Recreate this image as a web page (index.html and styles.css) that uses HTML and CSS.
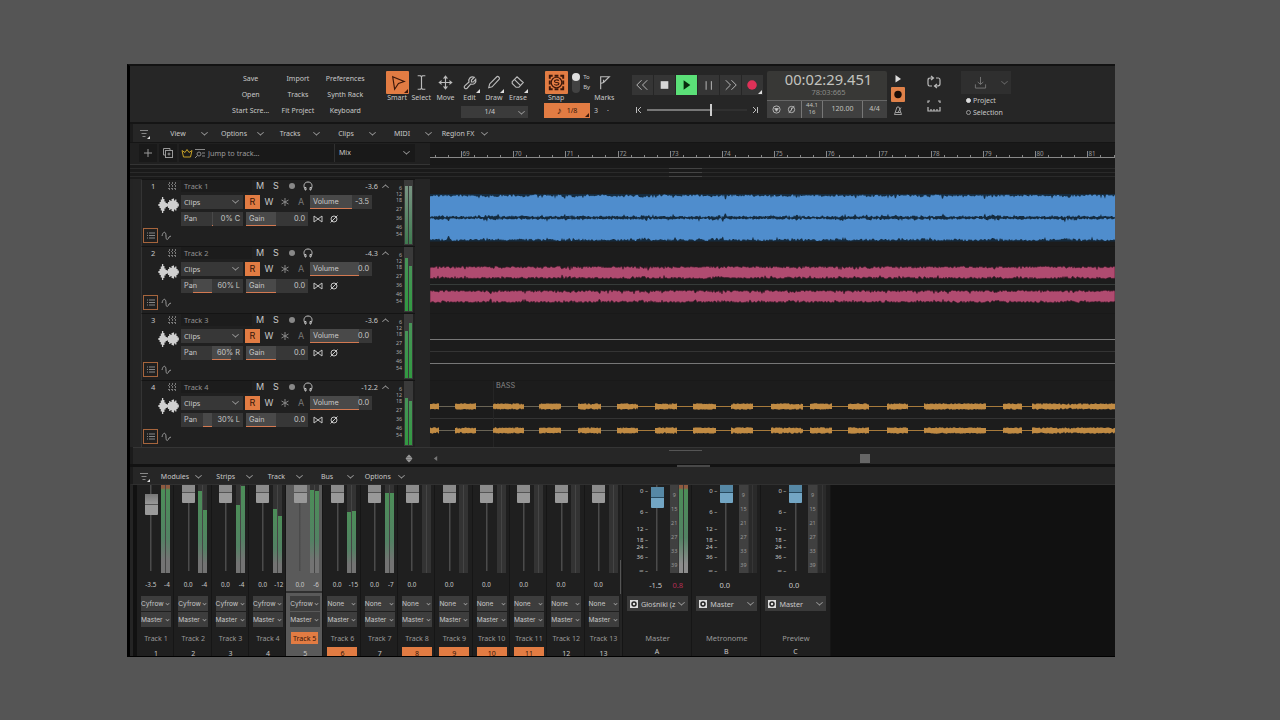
FILE: index.html
```html
<!DOCTYPE html>
<html lang="en">
<head>
    <meta charset="UTF-8">
    <meta name="viewport" content="width=device-width, initial-scale=1.0">
    <title>Multitrack Editor</title>
    <link rel="stylesheet" href="styles.css">
</head>
<body>
    <div class="window">
        <header class="toolbar">
            <div class="file-actions">
                <span>Save</span><span>Import</span><span>Preferences</span>
                <span>Open</span><span>Tracks</span><span>Synth Rack</span>
                <span>Start Scre...</span><span>Fit Project</span><span>Keyboard</span>
            </div>

            <div class="tools">
                <div class="tool-row">
                    <div class="tool active"><i class="tool-icon corner"><svg viewBox="0 0 24 24"><path d="M7 6l12 5-6 2-4 6z"/></svg></i>Smart</div>
                    <div class="tool"><i class="tool-icon"><svg viewBox="0 0 24 24"><path d="M8 5h3l1 1 1-1h3M12 6v12M8 19h3l1-1 1 1h3"/></svg></i>Select</div>
                    <div class="tool"><i class="tool-icon"><svg viewBox="0 0 24 24"><path d="M12 6v12M6 12h12M10 8l2-2.500L14 8M10 16l2 2.500 2-2.500M8 10l-2.500 2L8 14M16 10l2.500 2-2.500 2"/></svg></i>Move</div>
                    <div class="tool"><i class="tool-icon corner"><svg viewBox="0 0 24 24"><path d="M17 6.500l-3 3v2h2l2.500-3c1 4-2 6-5 5l-4 4.500c-2 1.500-4-1-2.500-2.500l4.500-4c-1-3 1.500-6.500 5.500-5z"/></svg></i>Edit</div>
                    <div class="tool"><i class="tool-icon corner"><svg viewBox="0 0 24 24"><path d="M7 17.500l1-4 7.500-7.500c1-1 3.500 1 2.500 2.500l-7.500 8z"/></svg></i>Draw</div>
                    <div class="tool"><i class="tool-icon corner"><svg viewBox="0 0 24 24"><path d="M6.500 11l5-5 6.500 6-4.500 5h-3l-4-4zM9 9l6 6"/></svg></i>Erase</div>
                </div>
                <div class="grid-select"><span>1/4</span><b class="chevron"></b></div>
            </div>

            <div class="snap">
                <div class="snap-top">
                    <div class="tool active"><i class="tool-icon"><svg viewBox="0 0 24 24"><path d="M5 8V5h3M10 5h4M16 5h3v3M19 10v4M19 16v3h-3M14 19h-4M8 19H5v-3M5 14v-4" stroke-width="2"/><circle cx="12" cy="12" r="5.500"/><path d="M14.500 10c-1-1-5-1-4.500 1s4.500 0 4.500 2-3.500 2-4.800 1"/></svg></i>Snap</div>
                    <i class="toggle"></i>
                    <div class="toggle-labels"><span>To</span><span>By</span></div>
                    <div class="tool marks"><i class="tool-icon"><svg viewBox="0 0 24 24"><path d="M8 19V6h9l-6 6-3 1M11 9v3"/></svg></i>Marks</div>
                </div>
                <div class="snap-bottom">
                    <div class="note-value corner"><span>♪</span><span>1/8</span></div>
                    <span class="mark-count">3</span><span>·</span>
                </div>
            </div>

            <div class="transport">
                <div class="transport-buttons">
                    <i><svg viewBox="0 0 22 20"><path d="M10 5l-5 5 5 5M16 5l-5 5 5 5"/></svg></i>
                    <i><svg viewBox="0 0 22 20"><rect x="7" y="6" width="8" height="8" fill="#d8d8d8" stroke="none"/></svg></i>
                    <i class="playing"><svg viewBox="0 0 22 20"><path d="M8 5v10l7-5z" fill="#082b0d" stroke="none"/></svg></i>
                    <i><svg viewBox="0 0 22 20"><path d="M8.500 6v9M14 6v9"/></svg></i>
                    <i><svg viewBox="0 0 22 20"><path d="M6 5l5 5-5 5M12 5l5 5-5 5"/></svg></i>
                    <i class="corner"><svg viewBox="0 0 22 20"><circle cx="10.500" cy="10" r="5" fill="#df3158" stroke="none"/></svg></i>
                </div>
                <div class="shuttle">
                    <svg viewBox="0 0 8 8"><path d="M1.500 1v6M6 1L3 4l3 3"/></svg>
                    <div class="shuttle-track"><i></i></div>
                    <svg viewBox="0 0 8 8"><path d="M6.500 1v6M2 1l3 3-3 3"/></svg>
                </div>
            </div>

            <div class="display">
                <div class="clock">00:02:29.451</div>
                <div class="bars">78:03:665</div>
                <div class="display-info">
                    <span class="io">
                        <svg viewBox="0 0 10 10"><circle cx="5" cy="5" r="4"/><path d="M3 4h4L5 7z" fill="#ccc"/></svg>
                        <svg viewBox="0 0 10 10"><circle cx="5" cy="5" r="3.500"/><path d="M2 9l6-8M5 3v3"/></svg>
                    </span>
                    <span class="rate">44.1<br>16</span>
                    <span>120.00</span>
                    <span>4/4</span>
                </div>
            </div>

            <div class="record-opts">
                <svg viewBox="0 0 14 14"><path d="M4.500 3v7.500L10 7z" fill="#ddd" stroke="none"/></svg>
                <i><svg viewBox="0 0 14 14"><circle cx="7" cy="7.500" r="3.700" fill="#180d08" stroke="none"/></svg></i>
                <svg viewBox="0 0 14 14"><path d="M6 3h2l2.500 7.500h-7zM4.500 8.500h5M7 8.500l3-5" stroke-width=".8"/></svg>
            </div>

            <div class="loop-opts">
                <svg viewBox="0 0 16 16"><path d="M6 12H3.500C2 12 2 11 2 10V6c0-2 1-2 3-2h2M5 2l2.500 2L5 6M10 4h2.500c1.500 0 1.500 1 1.500 2v4c0 2-1 2-3 2H9M11 10l-2.500 2 2.500 2"/></svg>
                <svg viewBox="0 0 16 16"><path d="M2 9v4h12V9M5 13v-2M8 13v-2M11 13v-2M2 5V3h2M14 5V3h-2"/></svg>
            </div>

            <div class="export">
                <div class="export-button">
                    <svg viewBox="0 0 14 14"><path d="M7 1v8M4 6.500L7 9l3-2.500M1.500 9v4h11V9"/></svg>
                    <b class="chevron"></b>
                </div>
                <div class="radio checked">Project</div>
                <div class="radio">Selection</div>
            </div>
        </header>

        <nav class="menubar">
            <svg class="filter-icon" viewBox="0 0 12 12"><path d="M1 2.500h8M2.500 5.500h5M3.500 8.500h3"/><path d="M11 8v3H8z" fill="#ddd" stroke="none"/></svg>
            <div><span>View</span><b class="chevron"></b></div>
            <div><span>Options</span><b class="chevron"></b></div>
            <div><span>Tracks</span><b class="chevron"></b></div>
            <div><span>Clips</span><b class="chevron"></b></div>
            <div><span>MIDI</span><b class="chevron"></b></div>
            <div><span>Region FX</span><b class="chevron"></b></div>
        </nav>

        <div class="finder">
            <svg class="finder-btn" viewBox="0 0 12 12"><path d="M6 2v8M2 6h8"/></svg>
            <svg class="finder-btn" viewBox="0 0 12 12"><path d="M3 8H1.500V1.500H8V3"/><rect x="3.500" y="3.500" width="7" height="7"/><path d="M7 5.500v3M5.500 7h3"/></svg>
            <div class="jump">
                <svg class="crown" viewBox="0 0 12 12"><path d="M2.500 10L1 3.500l3 2 2-3 2 3 3-2L9.500 10z"/></svg>
                <svg viewBox="0 0 12 12"><circle cx="5" cy="7" r="2"/><path d="M3.500 8.500L1 11M1 2.500h10M8 6h3M8 9h3"/></svg>
                <span>Jump to track...</span>
            </div>
            <div class="mix"><span>Mix</span><b class="chevron"></b></div>
            <svg class="ruler" id="ruler"></svg>
        </div>

        <div class="overview"><i></i></div>

        <main class="arrange">
            <div class="tracks" id="tracks"></div>
            <div class="clips" id="clips"></div>
        </main>

        <div class="arrange-scroll">
            <svg class="zoom-icon" viewBox="0 0 10 10"><path d="M5 0l4 4H1zM5 10l4-4H1zM1 4.500h8v1H1z"/></svg>
            <svg class="scroll-arrow" viewBox="0 0 6 6"><path d="M5 0v6L1 3z"/></svg>
            <i class="grip"></i>
            <i class="scroll-thumb"></i>
        </div>
        <div class="splitter"><i></i></div>

        <nav class="menubar mixer-menu">
            <svg class="filter-icon" viewBox="0 0 12 12"><path d="M1 2.500h8M2.500 5.500h5M3.500 8.500h3"/><path d="M11 8v3H8z" fill="#ddd" stroke="none"/></svg>
            <div><span>Modules</span><b class="chevron"></b></div>
            <div><span>Strips</span><b class="chevron"></b></div>
            <div><span>Track</span><b class="chevron"></b></div>
            <div><span>Bus</span><b class="chevron"></b></div>
            <div><span>Options</span><b class="chevron"></b></div>
        </nav>

        <section class="mixer">
            <div class="strips" id="strips"></div>
            <div class="mixer-divider"></div>
            <div class="buses" id="buses"></div>
        </section>
    </div>
    <script src="script.js"></script>
</body>
</html>
```
FILE: styles.css
```css
* {
    box-sizing: border-box;
}
body {
    margin: 0;
    padding: 64px 0 0 127px;
    height: 720px;
    overflow: hidden;
    background-color: #555;
    font-family: "Noto Sans", "Open Sans", sans-serif;
    font-size: 7px;
    line-height: 10px;
    color: #c8c8c8;
}
i {
    font-style: normal;
    display: block;
}
svg {
    display: block;
    fill: none;
    stroke: #bbb;
    stroke-width: 1;
    flex: none;
}
.window {
    width: 988px;
    height: 593px;
    overflow: hidden;
    background-color: #1b1b1b;
    border-left: 3px solid #000;
    border-top: 2px solid #121212;
    border-bottom: 1px solid #000;
}
.chevron {
    width: 5px;
    height: 5px;
    margin: 0 4px 2px;
    border-right: 1px solid #999;
    border-bottom: 1px solid #999;
    transform: scaleY(0.85) rotate(45deg);
    flex: none;
}
.corner {
    position: relative;
}
.corner::after {
    content: "";
    position: absolute;
    right: 1px;
    bottom: 1px;
    border-left: 4px solid transparent;
    border-bottom: 4px solid #ddd;
}
.active .corner::after,
.note-value.corner::after {
    border-bottom-color: #3a170a;
}

/* toolbar */
.toolbar {
    display: flex;
    height: 58px;
    padding-left: 97px;
    background-color: #262626;
    border-bottom: 2px solid #151515;
}
.file-actions {
    display: grid;
    grid-template-columns: repeat(3, 47.3px);
    grid-auto-rows: 16px;
    width: 142px;
    padding-top: 5px;
    line-height: 16px;
    text-align: center;
    white-space: nowrap;
}
.tools {
    width: 145px;
    margin-left: 16px;
    padding-top: 5px;
}
.tool-row {
    display: flex;
}
.tool {
    width: 24.2px;
    text-align: center;
    line-height: 8px;
}
.tool-icon {
    width: 23px;
    height: 23px;
    margin: 0 auto;
    border-radius: 1px;
}
.tool-icon svg {
    width: 23px;
    height: 23px;
    stroke-width: 1.2;
}
.active .tool-icon {
    background-color: #e27c43;
}
.active svg {
    stroke: #3a170a;
}
.grid-select {
    display: flex;
    align-items: center;
    justify-content: flex-end;
    width: 67px;
    height: 12px;
    margin: 4px 0 0 76px;
    background-color: #3b3b3b;
}
.grid-select span {
    margin-right: 20px;
}
.snap {
    width: 86px;
    margin-left: 14px;
    padding-top: 5px;
}
.snap-top {
    display: flex;
}
.toggle {
    width: 8px;
    height: 20px;
    margin: 2px 0 0 4px;
    border-radius: 4px;
    background-color: #424242;
}
.toggle::before {
    content: "";
    display: block;
    width: 8px;
    height: 8px;
    border-radius: 50%;
    background-color: #ddd;
}
.toggle-labels {
    display: flex;
    flex-direction: column;
    margin: 1px 0 0 3px;
    width: 10px;
    font-size: 6px;
}
.marks {
    margin-left: -1px;
}
.snap-bottom {
    display: flex;
    margin-top: 1px;
    line-height: 15px;
}
.note-value {
    display: flex;
    justify-content: center;
    gap: 5px;
    width: 46px;
    height: 15px;
    color: #35160a;
    background-color: #e27c43;
}
.note-value span:first-child {
    font-size: 10px;
}
.mark-count {
    margin: 0 9px 0 4px;
}
.transport {
    width: 132px;
    margin-left: 2px;
    padding-top: 9px;
}
.transport-buttons {
    display: flex;
    gap: 1px;
}
.transport-buttons i {
    width: 21px;
    height: 20px;
    background-color: #353535;
}
.transport-buttons .playing {
    background-color: #5be078;
}
.transport-buttons svg {
    width: 21px;
    height: 20px;
}
.shuttle {
    display: flex;
    align-items: center;
    gap: 4px;
    margin-top: 9px;
    padding: 0 3px;
}
.shuttle svg {
    width: 8px;
    height: 8px;
}
.shuttle-track {
    display: flex;
    justify-content: flex-end;
    align-items: center;
    width: 100px;
    height: 12px;
    padding-right: 35px;
    background: linear-gradient(90deg, #777 63%, #303030 63%) center / 100% 2px no-repeat;
}
.shuttle-track i {
    width: 2px;
    height: 12px;
    background-color: #ccc;
}
.display {
    width: 120px;
    height: 47px;
    margin: 5px 0 0 3px;
    background-color: #383836;
    border-radius: 2px;
    text-align: center;
    color: #c3c3bf;
}
.clock {
    height: 17px;
    padding-left: 3px;
    font-size: 14.7px;
    line-height: 17px;
}
.bars {
    height: 12px;
    padding-left: 3px;
    font-size: 7.5px;
    line-height: 9px;
    color: #8b8b88;
}
.display-info {
    display: flex;
    height: 18px;
    border-top: 1px solid #666;
    background-color: #404040;
    line-height: 16px;
}
.display-info span {
    width: 40px;
    border-left: 1px solid #777;
}
.display-info .io {
    display: flex;
    align-items: center;
    justify-content: space-evenly;
    width: 34px;
    border-left: none;
}
.display-info svg {
    width: 9px;
    height: 9px;
}
.display-info .rate {
    width: 21px;
    font-size: 6px;
    line-height: 7px;
    padding-top: 1px;
}
.display-info span:last-child {
    width: 24px;
}
.record-opts {
    width: 15px;
    margin-left: 4px;
    padding-top: 6px;
}
.record-opts svg {
    width: 14px;
    height: 14px;
}
.record-opts i {
    width: 14px;
    height: 15px;
    margin: 1px 0 2px;
    border-radius: 1px;
    background-color: #df8149;
}
.loop-opts {
    margin-left: 20px;
    padding-top: 8px;
}
.loop-opts svg {
    width: 16px;
    height: 16px;
    margin-bottom: 8px;
    stroke-width: 1.2;
}
.export {
    width: 54px;
    margin-left: 19px;
    padding-top: 5px;
}
.export-button {
    display: flex;
    align-items: center;
    justify-content: flex-end;
    gap: 11px;
    width: 50px;
    height: 23px;
    background-color: #2f2f2f;
}
.export-button svg {
    width: 13px;
    height: 13px;
    stroke: #777;
}
.export-button .chevron {
    border-color: #666;
}
.radio {
    display: flex;
    align-items: center;
    gap: 2px;
    height: 12px;
    padding: 1px 0 0 5px;
}
.radio::before {
    content: "";
    width: 5px;
    height: 5px;
    border: 1px solid #999;
    border-radius: 50%;
    box-sizing: border-box;
}
.radio.checked::before {
    background-color: #ddd;
    border-color: #ddd;
}

/* menu bars */
.menubar {
    display: flex;
    align-items: center;
    height: 18px;
    padding-top: 1px;
    margin-left: 3px;
    background-color: #262626;
}
.menubar > div {
    display: flex;
    align-items: center;
    width: 56px;
}
.menubar > div > span {
    width: 38px;
    text-align: center;
    white-space: nowrap;
}
.menubar .filter-icon {
    width: 14px;
    height: 12px;
    margin: 0 7px 0 5px;
    stroke: #888;
}
.menubar .chevron {
    margin-left: 5px;
}

/* search row and ruler */
.finder {
    display: flex;
    align-items: center;
    height: 23px;
    padding-left: 9px;
    border-top: 1px solid #151515;
    border-bottom: 1px solid #343434;
    background-color: #202020;
}
.finder-btn {
    width: 18px;
    height: 18px;
    padding: 3px;
    margin-right: 2px;
    background-color: #191919;
    stroke: #999;
}
.finder > :not(.ruler) {
    margin-top: -2px;
}
.jump {
    display: flex;
    align-items: center;
    gap: 1px;
    width: 156px;
    height: 18px;
    padding-left: 2px;
    background-color: #191919;
    border-right: 1px solid #303030;
    color: #9b9b9b;
    font-size: 7.3px;
}
.jump svg {
    width: 12px;
    height: 12px;
    stroke: #888;
}
.jump .crown {
    stroke: #c6a126;
}
.jump span {
    margin-left: 1px;
}
.mix {
    display: flex;
    align-items: center;
    justify-content: space-between;
    width: 80px;
    height: 18px;
    padding: 0 2px 0 4px;
    background-color: #191919;
}
.ruler {
    width: 685px;
    height: 22px;
    margin-left: 15px;
    background-color: #191919;
    stroke: #888;
    shape-rendering: crispEdges;
}
.ruler text {
    fill: #999;
    stroke: none;
    font-size: 6.3px;
}
.overview {
    height: 14px;
    padding-left: 539px;
    background: repeating-linear-gradient(#1a1a1a 0 3px, #2a2a2a 3px 4px);
}
.overview i {
    width: 33px;
    height: 13px;
    background: linear-gradient(#444, #444) 0 3px / 100% 1px no-repeat, linear-gradient(#444, #444) 0 7px / 100% 1px no-repeat, linear-gradient(#444, #444) 0 11px / 100% 1px no-repeat;
}

/* tracks */
.arrange {
    display: flex;
    height: 268px;
    background-color: #1c1c1c;
}
.tracks {
    width: 300px;
    padding: 0 15px 0 8px;
    border-left: 3px solid #242424;
    background-color: #252525;
}
.track {
    display: flex;
    height: 67px;
    background-color: #202020;
    border-top: 1px solid #141414;
    border-left: 1px solid #343434;
}
.track-side {
    display: grid;
    grid-template-columns: 22px 18px;
    grid-template-rows: 14px 34px 17px;
    width: 39px;
    flex: none;
}
.track-number {
    padding-left: 9px;
    font-size: 7.5px;
    line-height: 13px;
}
.track-side .dots {
    width: 9px;
    height: 9px;
    margin: 2px 0 0 4px;
    stroke: #777;
}
.wave-icon {
    grid-column: 1 / 3;
    width: 21px;
    height: 20px;
    margin: 1px 0 0 16px;
}
.list-icon {
    width: 15px;
    height: 15px;
    margin-left: 1px;
    border: 1px solid #a6653d;
    stroke: #888;
}
.curve-icon {
    width: 11px;
    height: 11px;
    margin: 2px 0 0 -3px;
    stroke: #999;
}
.track-body {
    width: 211px;
    flex: none;
}
.track-head {
    display: flex;
    align-items: center;
    height: 12px;
    margin-bottom: 3px;
}
.track-name {
    width: 71px;
    padding-left: 3px;
    background-color: #1c1c1c;
    font-size: 7.4px;
    line-height: 12px;
    color: #929292;
}
.cell {
    width: 16px;
    text-align: center;
    font: 9px/14px Inter, "Liberation Sans", sans-serif;
}
.cell svg {
    width: 10px;
    height: 10px;
    margin: 2px auto;
    stroke: #c4c4c4;
}
.dim {
    color: #777;
}
.peak {
    width: 62px;
    text-align: right;
    font-size: 7.3px;
    line-height: 9px;
}
.peak + .chevron {
    margin: 3px 0 0 5px;
    transform: scaleY(0.85) rotate(225deg);
}
.track-row {
    display: flex;
    height: 14px;
    margin-bottom: 3px;
    font-family: Inter, "Liberation Sans", sans-serif;
}
.field {
    position: relative;
    display: flex;
    align-items: center;
    justify-content: space-between;
    width: 62px;
    height: 14px;
    margin-right: 3px;
    padding: 0 3px;
    font: 7.3px/12px Inter, "Liberation Sans", sans-serif;
    background-color: #373737;
}
.field.clips-field {
    margin-right: 2px;
    padding-bottom: 1px;
    font-family: "Noto Sans", sans-serif;
}
.field.volume {
    margin-left: 1px;
}
.field .chevron {
    margin-right: 2px;
}
.field .fill {
    position: absolute;
    top: 0;
    bottom: 0;
    border-bottom: 1.5px solid #d37951;
    background-color: #494949;
}
.field span {
    position: relative;
}
.read {
    width: 15px;
    margin-right: 1px;
    background-color: #e27c43;
    color: #35160a;
}
.track-row:last-child .cell {
    margin-left: -1px;
    margin-right: 1px;
}
.scale {
    display: flex;
    flex-direction: column;
    width: 15px;
    padding: 5px 2px 0 0;
    margin-left: -3px;
    font-size: 5.3px;
    line-height: 6px;
    text-align: right;
    color: #aaa;
}
.scale span {
    height: 9px;
}
.scale span:nth-child(-n+2) {
    height: 6px;
}
.scale span:nth-child(6) {
    height: 7px;
}
.track-meter {
    display: flex;
    align-items: flex-end;
    gap: 1px;
    width: 9px;
    height: 65px;
    padding: 1px;
    background-color: #3a3a3a;
    flex: none;
}
.track-meter i {
    width: 3px;
    background: linear-gradient(#489458, #319a41);
}
.track.muted .track-meter i {
    background: linear-gradient(#799483, #3f7b50);
}
.clips {
    width: 685px;
    overflow: hidden;
}
.clips svg {
    width: 685px;
    height: 67px;
    border-top: 1px solid #191919;
}
.clips text {
    fill: #888;
    stroke: none;
    font: 7.3px Inter, sans-serif;
}
.arrange-scroll {
    display: flex;
    height: 17px;
    padding-top: 3px;
    margin-left: 3px;
    border-top: 1px solid #353535;
    background-color: #262626;
}
.zoom-icon {
    width: 8px;
    height: 9px;
    margin: 3px 0 0 272px;
    fill: #999;
    stroke: none;
}
.scroll-arrow {
    width: 5px;
    height: 5px;
    margin: 5px 0 0 20px;
    fill: #777;
    stroke: none;
}
.grip {
    width: 33px;
    height: 1px;
    margin: -1px 0 0 231px;
    background-color: #555;
}
.scroll-thumb {
    width: 10px;
    height: 9px;
    margin: 3px 0 0 158px;
    background-color: #666;
}
.splitter {
    height: 3px;
    padding: 1px 0 0 547px;
    background-color: #121212;
}
.splitter i {
    width: 33px;
    height: 2px;
    background-color: #484848;
}
.mixer-menu {
    height: 17px;
    padding-top: 2px;
}
.mixer-menu > div {
    width: 50.7px;
}
.mixer-menu > div > span {
    width: 32px;
}

/* mixer */
.mixer {
    display: flex;
    height: 172px;
    padding-left: 4px;
    background-color: #111;
    border-top: 1px solid #303030;
    border-left: 3px solid #242424;
}
.strips {
    display: flex;
    width: 485px;
    flex: none;
}
.strip {
    width: 37.3px;
    flex: none;
    padding-left: 4px;
    background-color: #1f1f1f;
    border-right: 1px solid #161616;
}
.strip.selected {
    background: linear-gradient(#5a5a5a 106px, #303030 106px, #303030 108px, #5a5a5a 108px);
}
.fader-area {
    display: flex;
    height: 88px;
}
.fader {
    width: 20px;
    height: 86px;
    background: linear-gradient(#4b4b4b, #4b4b4b) center / 1.5px 100% no-repeat;
}
.knob {
    width: 13px;
    height: 18px;
    margin: 0 auto;
    border-radius: 0 0 1px 1px;
    background: linear-gradient(#8b8b8b 7px, #555 7px, #555 8px, #999 8px);
}
.fader .low {
    height: 21px;
    background: linear-gradient(#777, #999 10px, #555 10px, #555 11px, #9a9a9a 11px);
}
.fader:has(.low) {
    padding-top: 9px;
}
.strip-meter {
    display: flex;
    align-items: flex-end;
    gap: 1px;
    width: 9px;
    height: 88px;
    background: linear-gradient(90deg, #333 4px, #454545 4px, #454545 5px, #333 5px);
}
.strip-meter i {
    width: 4px;
    background: linear-gradient(#4c8e58, #528263 60%, #737373 85%);
}
.strip-meter i.clip {
    background: linear-gradient(#8f5a40 3px, #4c8e58 5px, #528263 60%, #737373 85%);
}
.levels {
    display: flex;
    height: 23px;
    font-size: 6.3px;
    line-height: 24px;
}
.levels span:first-child {
    width: 20px;
    text-align: center;
}
.levels span:last-child {
    width: 13px;
    text-align: center;
}
.route {
    display: flex;
    align-items: center;
    justify-content: space-between;
    width: 30px;
    height: 15px;
    margin-bottom: 1px;
    padding: 0 1px 0 0;
    background-color: #3d3d3d;
    font: 6.6px/12px Inter, "Liberation Sans", sans-serif;
}
.route .chevron {
    width: 3px;
    height: 3px;
    margin: 0 1px 1px 0;
}
.strip-name {
    width: 30px;
    height: 12px;
    margin: 5px 0 3px;
    font-size: 7.1px;
    line-height: 12px;
    text-align: center;
    white-space: nowrap;
    color: #999;
}
.selected .strip-name {
    width: 27px;
    margin-left: 1px;
    color: #35160a;
    background-color: #e27c43;
}
.strip-number {
    width: 30px;
    height: 12px;
    font-size: 7px;
    line-height: 14px;
    text-align: center;
}
.strip-number.armed {
    color: #35160a;
    background-color: #e27c43;
}
.mixer-divider {
    width: 3px;
    height: 171px;
    margin-left: -2px;
    background: linear-gradient(#555, #555) 0 75px / 1px 34px no-repeat, #242424;
    border-right: 1px solid #151515;
}
.buses {
    display: flex;
}
.bus {
    width: 69.2px;
    padding-left: 4px;
    background-color: #1f1f1f;
    border-right: 1px solid #161616;
}
.bus-fader-area {
    display: flex;
    height: 88px;
}
.db-scale {
    position: relative;
    width: 21px;
}
.db-scale span {
    position: absolute;
    right: 0;
    font-size: 6px;
    line-height: 8px;
}
.bus .fader {
    width: 18px;
}
.bus .knob {
    background: linear-gradient(#5688a5 7px, #274a5f 7px, #274a5f 8px, #73a6c4 8px);
}
.bus .fader:has(.low) {
    padding-top: 2px;
}
.bus .low {
    background: linear-gradient(#5688a5 10px, #274a5f 10px, #274a5f 11px, #73a6c4 11px);
}
.bus-meter {
    display: flex;
    align-items: flex-end;
    gap: 1px;
    width: 18px;
    height: 88px;
    margin-left: 4px;
    background-color: #363636;
}
.bus-meter div {
    width: 9px;
    height: 88px;
    padding-top: 3px;
    background-color: #404040;
    color: #999;
    font-size: 5.5px;
    line-height: 14px;
    text-align: center;
}
.bus-meter i {
    width: 4px;
    height: 88px;
    background: #2a2a2a;
}
.bus-meter i.clip {
    background: linear-gradient(#8f5a40 3px, #4c8e58 5px, #528263 60%, #8c8c8c 90%);
}
.bus .levels {
    padding-left: 20px;
    font-size: 7.5px;
}
.bus .levels span:last-child {
    width: 31px;
}
.over {
    color: #b72e56;
}
.output {
    display: flex;
    align-items: center;
    gap: 3px;
    width: 61px;
    height: 15px;
    padding-left: 3px;
    background-color: #3a3a3a;
    font-size: 7.2px;
}
.output svg {
    width: 8px;
    height: 8px;
}
.output span {
    width: 35px;
    flex: none;
    white-space: nowrap;
}
.output .chevron {
    margin: 0 0 2px;
}
.bus-name {
    height: 31px;
    padding: 23px 3px 0 0;
    font-size: 7.5px;
    line-height: 9px;
    text-align: center;
    color: #999;
}
.bus-letter {
    padding: 5px 4px 0 0;
    font-size: 7px;
    line-height: 9px;
    text-align: center;
}
```
FILE: script.js
```js
const tracks = [
    { peak: '-3.6', volume: '-3.5', volFill: 42, pan: '0% C', panFrom: 31, panWidth: 1, meter: [58, 58], muted: true },
    { peak: '-4.3', volume: '0.0', volFill: 49, pan: '60% L', panFrom: 12, panWidth: 19, meter: [53, 45] },
    { peak: '-3.6', volume: '0.0', volFill: 49, pan: '60% R', panFrom: 31, panWidth: 19, meter: [47, 55] },
    { peak: '-12.2', volume: '0.0', volFill: 49, pan: '30% L', panFrom: 22, panWidth: 9, meter: [47, 44] }
];

const strips = [
    { gain: '-3.5', peak: '-4', meter: [88, 88], low: true, clip: true },
    { gain: '0.0', peak: '-4', meter: [82, 63] },
    { gain: '0.0', peak: '-4', meter: [68, 87] },
    { gain: '0.0', peak: '-12', meter: [64, 57] },
    { gain: '0.0', peak: '-6', meter: [83, 82], selected: true },
    { gain: '0.0', peak: '-15', meter: [61, 62], armed: true },
    { gain: '0.0', peak: '-7', meter: [80, 80] },
    { gain: '0.0', armed: true },
    { gain: '0.0', armed: true },
    { gain: '0.0', armed: true },
    { gain: '0.0', armed: true },
    { gain: '0.0' },
    { gain: '0.0' }
];

const buses = [
    { name: 'Master', letter: 'A', gain: '-1.5', peak: '0.8', output: 'Głośniki (z', live: true },
    { name: 'Metronome', letter: 'B', gain: '0.0', peak: '', output: 'Master' },
    { name: 'Preview', letter: 'C', gain: '0.0', peak: '', output: 'Master' }
];

// seeded so the waveforms look the same on every load
let seed = 7;
function random() {
    seed = (seed * 16807) % 2147483647;
    return seed / 2147483647;
}

function fillBar(from, width) {
    return `<i class="fill" style="left:${from}px;width:${width}px"></i>`;
}

// loud passages bulge slowly, so the gaps cluster instead of being even
function wavePath(from, to, top, bottom, rough) {
    let upper = '';
    let lower = '';
    for (let x = from; x <= to; x += 1) {
        const swell = Math.max(0, Math.sin(x / 8) * Math.sin(x / 27)) * rough * 0.6;
        const spike = random() > 0.94 ? rough : 0;
        upper += `L${x} ${(top + random() * (rough + swell) + spike).toFixed(1)}`;
        lower = `L${x} ${(bottom - random() * (rough + swell) - spike).toFixed(1)}` + lower;
    }
    return 'M' + upper.slice(1) + lower + 'z';
}

function waveIcon() {
    const heights = [2, 6, 11, 16, 12, 7, 4, 3, 6, 10, 8, 12, 13, 9, 11, 6, 3];
    let d = '';
    heights.forEach((h, i) => { d += `M${i * 1.2 + 1} ${10 - h / 2}v${h}`; });
    return `<svg class="wave-icon" viewBox="0 0 21 20"><path d="${d}" stroke="#d0d0d0" stroke-width="1.3"/></svg>`;
}

function trackRow(t, i) {
    return `
    <div class="track ${t.muted ? 'muted' : ''}">
        <div class="track-side">
            <span class="track-number">${i + 1}</span>
            <svg class="dots" viewBox="0 0 9 9"><path d="M1.500 0v9M4.500 0v9M7.500 0v9" stroke-dasharray="2 1"/><path d="M0 2.500h9M0 6.500h9" stroke-dasharray="1 2"/></svg>
            ${waveIcon()}
            <svg class="list-icon" viewBox="0 0 13 13"><path d="M3 4h1M5 4h6M3 6.500h1M5 6.500h6M3 9h1M5 9h6"/></svg>
            <svg class="curve-icon" viewBox="0 0 11 11"><path d="M1 6c1-5 4-5 4 0s2 4 3 1l2-1"/></svg>
        </div>
        <div class="track-body">
            <div class="track-head">
                <span class="track-name">Track ${i + 1}</span>
                <span class="cell">M</span>
                <span class="cell">S</span>
                <span class="cell"><svg viewBox="0 0 10 10"><circle cx="5" cy="5" r="3" fill="#888" stroke="none"/></svg></span>
                <span class="cell"><svg viewBox="0 0 10 10"><path d="M3 9H2V8C0 5 1 1 5 1s5 4 3 7v1H7V6.500h1.500M3 9V6.500H1.500"/></svg></span>
                <span class="peak">${t.peak}</span><b class="chevron"></b>
            </div>
            <div class="track-row">
                <div class="field clips-field"><span>Clips</span><b class="chevron"></b></div>
                <span class="cell read">R</span>
                <span class="cell">W</span>
                <span class="cell"><svg viewBox="0 0 10 10"><path d="M5 1v8M1.500 3l7 4M8.500 3l-7 4" stroke="#888"/></svg></span>
                <span class="cell dim">A</span>
                <div class="field volume">${fillBar(0, t.volFill)}<span>Volume</span><span>${t.volume}</span></div>
            </div>
            <div class="track-row">
                <div class="field">${fillBar(t.panFrom, t.panWidth)}<span>Pan</span><span>${t.pan}</span></div>
                <div class="field">${fillBar(0, 30)}<span>Gain</span><span>0.0</span></div>
                <span class="cell"><svg viewBox="0 0 10 10"><path d="M1 2v6l8-6v6L1 2"/></svg></span>
                <span class="cell"><svg viewBox="0 0 10 10"><circle cx="5" cy="5" r="3"/><path d="M1.500 8.500l7-7"/></svg></span>
            </div>
        </div>
        <div class="scale"><span>6</span><span>12</span><span>18</span><span>27</span><span>36</span><span>46</span><span>54</span></div>
        <div class="track-meter"><i style="height:${t.meter[0]}px"></i><i style="height:${t.meter[1]}px"></i></div>
    </div>`;
}

function blueClip() {
    return `<svg><rect y="14" width="685" height="47.500" fill="#152b3e" stroke="none"/>
        <path d="${wavePath(0, 685, 14.5, 38, 2.2)}" fill="#4f8dcd" stroke="none"/>
        <path d="${wavePath(0, 685, 37.5, 61, 2.2)}" fill="#4f8dcd" stroke="none"/>
        <path d="${wavePath(0, 685, 35.7, 39.7, 2)}" fill="#152b3e" stroke="none"/></svg>`;
}

function pinkClip() {
    return `<svg><path d="M0 37.500h685" stroke="#363b39"/>
        <path d="${wavePath(0, 685, 19, 32, 1.8)}" fill="#b04b70" stroke="#42172a" stroke-width=".6"/>
        <path d="${wavePath(0, 685, 43, 56, 1.8)}" fill="#b04b70" stroke="#42172a" stroke-width=".6"/></svg>`;
}

function emptyClip() {
    return '<svg><path d="M0 25.500h685M0 49.500h685" stroke="#777"/><path d="M0 37.500h685" stroke="#343434"/></svg>';
}

function bassClip() {
    const notes = [[0, 9], [25, 46], [63, 94], [109, 131], [148, 171], [187, 208], [225, 247], [263, 286], [301, 323],
        [341, 373], [380, 402], [418, 439], [457, 478], [494, 556], [573, 592], [602, 685]];
    let svg = '<svg><path d="M0 37.500h685" stroke="#343434"/><path d="M0 25.500h187M0 49.500h187" stroke="#6a6455"/>';
    svg += '<path d="M187 25.500h498M187 49.500h498" stroke="#a77a3b"/><path d="M63.500 0v66" stroke="#252525"/>';
    [25.5, 49.5].forEach(y => {
        notes.forEach(([from, to]) => {
            svg += `<path d="${wavePath(from, to, y - 3.3, y + 3.3, 1)}" fill="#c18b43" stroke="none"/>`;
        });
    });
    return svg + '<text x="66" y="7">BASS</text></svg>';
}

function drawRuler() {
    let svg = '<path d="M0 14.500h685"/>';
    for (let n = -2; n < 51; n++) {
        const x = Math.round(31 + n * 13.05);
        if (n % 4 === 0) {
            svg += `<path d="M${x + 0.5} 8v6"/><text x="${x + 1.5}" y="13">${69 + n / 4}</text>`;
        } else {
            svg += `<path d="M${x + 0.5} 12v2"/>`;
        }
    }
    document.getElementById('ruler').innerHTML = svg;
}

function mixerStrip(s, i) {
    const meter = s.meter || [0, 0];
    return `
    <div class="strip ${s.selected ? 'selected' : ''}">
        <div class="fader-area">
            <div class="fader"><i class="knob ${s.low ? 'low' : ''}"></i></div>
            <div class="strip-meter">${meter.map(h => `<i class="${s.clip ? 'clip' : ''}" style="height:${h}px"></i>`).join('')}</div>
        </div>
        <div class="levels"><span>${s.gain}</span><span>${s.peak || ''}</span></div>
        <div class="route"><span>${i < 5 ? 'Cyfrow' : 'None'}</span><b class="chevron"></b></div>
        <div class="route"><span>Master</span><b class="chevron"></b></div>
        <div class="strip-name">Track ${i + 1}</div>
        <div class="strip-number ${s.armed ? 'armed' : ''}">${i + 1}</div>
    </div>`;
}

function busStrip(b) {
    const marks = [['0', 2], ['6', 23], ['12', 40], ['18', 51], ['24', 58], ['36', 68], ['∞', 82]];
    return `
    <div class="bus">
        <div class="bus-fader-area">
            <div class="db-scale">${marks.map(([label, y]) => `<span style="top:${y}px">${label} –</span>`).join('')}</div>
            <div class="fader"><i class="knob ${b.live ? 'low' : ''}"></i></div>
            <div class="bus-meter"><div>9<br>15<br>21<br>27<br>33<br>39</div><i class="${b.live ? 'clip' : ''}"></i><i class="${b.live ? 'clip' : ''}"></i></div>
        </div>
        <div class="levels"><span>${b.gain}</span><span class="over">${b.peak}</span></div>
        <div class="output">
            <svg viewBox="0 0 8 8"><rect width="8" height="8" fill="#ddd" stroke="none"/><circle cx="4" cy="4" r="2" stroke="#222" stroke-width="1.5"/></svg>
            <span>${b.output}</span><b class="chevron"></b>
        </div>
        <div class="bus-name">${b.name}</div>
        <div class="bus-letter">${b.letter}</div>
    </div>`;
}

document.getElementById('tracks').innerHTML = tracks.map(trackRow).join('');
document.getElementById('clips').innerHTML = blueClip() + pinkClip() + emptyClip() + bassClip();
document.getElementById('strips').innerHTML = strips.map(mixerStrip).join('');
document.getElementById('buses').innerHTML = buses.map(busStrip).join('');
drawRuler();
```
